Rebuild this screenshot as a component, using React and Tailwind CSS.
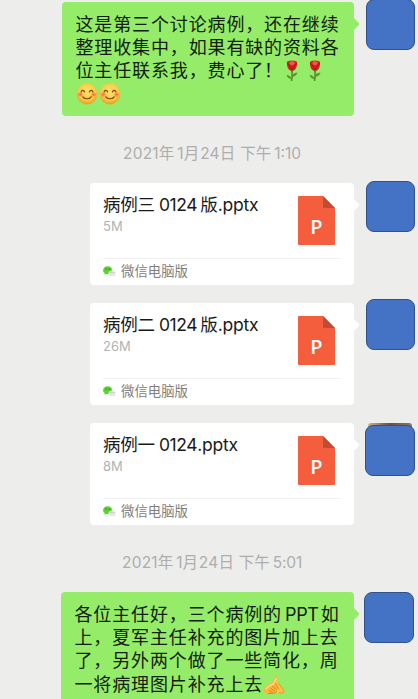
import clsx from "clsx";

// ---------- Data ----------
const files = [
  { id: 3, name: ["病例三", "0124", "版", ".pptx"], size: "5M", row: "mt-[20px]", avatar: "-mt-[2px] ml-[12px] w-[49px]" },
  { id: 2, name: ["病例二", "0124", "版", ".pptx"], size: "26M", row: "mt-[18px]", avatar: "-mt-[4px] ml-[12px] w-[49px]" },
  { id: 1, name: ["病例一", "0124", "", ".pptx"], size: "8M", row: "mt-[18px]", avatar: "ml-[11px] w-[50px]", peek: true },
];

// ---------- Emoji ----------
function Smile() {
  return (
    <svg width="22" height="22" viewBox="0 0 22 22" className="mr-px shrink-0">
      <defs>
        <radialGradient id="face" cx="50%" cy="38%" r="62%">
          <stop offset="0" stopColor="#ffe56a" />
          <stop offset="0.65" stopColor="#fdca42" />
          <stop offset="1" stopColor="#ea9a20" />
        </radialGradient>
        <radialGradient id="blush">
          <stop offset="0" stopColor="#f8604a" />
          <stop offset="1" stopColor="#f8604a" stopOpacity="0.1" />
        </radialGradient>
      </defs>
      <circle cx="11" cy="11" r="10.4" fill="url(#face)" />
      <ellipse cx="4.4" cy="11.5" rx="3" ry="2.4" fill="url(#blush)" />
      <ellipse cx="17.6" cy="11.5" rx="3" ry="2.4" fill="url(#blush)" />
      <g fill="none" stroke="#7a4312" strokeWidth="1.2" strokeLinecap="round">
        <path d="M5.1 9c.5-2.200 2.900-2.200 3.500 0M13.400 9c.6-2.200 3-2.200 3.500 0" />
        <path d="M6.800 13.800c2 2.600 6.400 2.600 8.400 0" />
      </g>
    </svg>
  );
}

function Rose({ className }) {
  return (
    <svg width="12" height="22" viewBox="0 0 12 22" className={clsx("shrink-0", className)}>
      <path d="M6 10c.3 4 .2 7-.4 11" fill="none" stroke="#4e8a2a" strokeWidth="1.5" />
      <path d="M5.600 19C2.800 19 1.200 17.400.5 15c2.900.2 4.600 1.500 5.100 4z" fill="#5d962f" />
      <path d="M6 16.800c.4-2.500 2-4 5.400-4.200-.5 2.700-2.300 4.200-5.400 4.200z" fill="#5d962f" />
      <path d="M2.600 9.300 6 11.700l3.600-2.400z" fill="#4b7d2b" />
      <path d="M1 1.800C2.500.6 4 .8 6 .5c2 .3 3.500.1 5 1.300.3 3.500-.4 8.700-5 8.900C1.400 10.500.7 5.300 1 1.800z" fill="#d81f20" />
      <path d="M3.300 2.200C5 1 7 1 8.700 2.200 8.500 4 7.500 5 6 5.200 4.500 5 3.500 4 3.300 2.200z" fill="#f4584c" />
      <path d="M1.300 3.200C3 5 4.700 6.500 6 10M10.700 3.200C9.400 5 7.600 7 6 10" fill="none" stroke="#a50f16" strokeWidth="0.8" />
    </svg>
  );
}

function Hands() {
  return (
    <svg width="22" height="20" viewBox="0 0 22 20" className="mt-[2px] shrink-0">
      {/* raised hand */}
      <path d="M12.600 1.300c.8-.8 1.900-.4 2 .7l.6 5.800 5.500 7.500c.5.900-.1 2.700-1.400 2.700l-5.300-.3-4-4.500z" fill="#ffc247" />
      <path d="m15.200 7.800 5.500 7.500c.5.900-.1 2.700-1.400 2.700l-3.300-.2" fill="none" stroke="#e98c2b" strokeWidth="0.900" />
      {/* front hand */}
      <path d="M.6 13.600 5.200 9.300l3.900-2.200 3.700-5.900c.9-.8 1.900 0 1.600 1.100l-2 6.300 3.200 4.800c.3 1-.8 1.500-1.500.8l-.5 2.300c-.3 1.300-1.600 1.500-3 1.700l-5.300.4L1 17.300z" fill="#ffb63c" />
      <path d="M3 13.800 7 10.300l3.500-1.500 2.700-5.200" fill="none" stroke="#ffe08a" strokeWidth="1.300" strokeLinecap="round" />
      <path d="m12.400 8.600 3.200 4.800M9.500 11.300l4 3.300M7.800 13.500l3.900 2.600M6.200 15.500l3 1.700M5.300 18.600l5.300-.4c1.400-.2 2.700-.4 3-1.700" fill="none" stroke="#dc7628" strokeWidth="0.900" strokeLinecap="round" />
    </svg>
  );
}

// ---------- Icons ----------
function WechatIcon() {
  return (
    <svg width="13" height="11" viewBox="0 0 13 11" className="shrink-0">
      <path d="M4.700.2C2.100.2.1 2 .1 4.300c0 1.300.6 2.200 1.600 2.900l-.4 1.500 1.700-.8c.6.200 1.100.2 1.700.2 2.600 0 4.600-1.700 4.600-3.800S7.300.2 4.700.2z" fill="#56d62b" />
      <ellipse cx="9.100" cy="7.300" rx="3.600" ry="2.900" fill="#e6e6e8" />
      <path d="m10.400 9.600 1.400 1.100-.2-1.800z" fill="#dedee1" />
      <circle cx="3.100" cy="3.100" r="0.700" fill="#1f7415" />
      <circle cx="6.300" cy="3.100" r="0.700" fill="#1f7415" />
      <circle cx="8" cy="6.600" r="0.500" fill="#999" />
      <circle cx="10.300" cy="6.600" r="0.500" fill="#999" />
    </svg>
  );
}

function PptIcon() {
  return (
    <div className="grid h-[49px] w-[37px] shrink-0">
      <svg width="37" height="49" viewBox="0 0 37 49" className="col-start-1 row-start-1">
        <path d="M1 0h24l12 12v36a1 1 0 0 1-1 1H1a1 1 0 0 1-1-1V1a1 1 0 0 1 1-1z" fill="#f45e3d" />
        <path d="M25 0v11a1 1 0 0 0 1 1h11z" fill="#c24b31" />
      </svg>
      <span className="col-start-1 row-start-1 mt-[21px] text-center font-['Open_Sans',sans-serif] text-[20px] leading-[20px] font-semibold text-white">
        P
      </span>
    </div>
  );
}

// ---------- Parts ----------
function Tail({ className }) {
  return (
    <svg width="6" height="12" viewBox="0 0 6 12" className={clsx("absolute top-[16px] left-full", className)}>
      <path d="M0 0l4.800 5.100q.8.900 0 1.800L0 12z" fill="currentColor" />
    </svg>
  );
}

function Avatar({ className, peek }) {
  return (
    <div className={clsx("shrink-0", className)}>
      {/* edge of the photo behind the cover */}
      {peek && (
        <div className="mx-[3px] -mb-[2px] h-[4px] rounded-t-[3px] bg-linear-to-r from-[#d3b18e] via-[#62504a] to-[#927867]" />
      )}
      <div className="h-[51px] rounded-[8px] border border-[#2f528f] bg-[#4472c4]" />
    </div>
  );
}

function Line({ children }) {
  return <div className="flex h-[23.200px] items-center whitespace-nowrap">{children}</div>;
}

function Timestamp({ time, className }) {
  return (
    <div className={clsx("flex h-[18px] items-center whitespace-nowrap text-[15.500px] text-[#adadad]", className)}>
      <span className="tracking-[0.200px]">2021</span>
      <span>年</span>
      <span className="ml-[3px]">1</span>
      <span>月</span>
      <span className="ml-px tracking-[0.200px]">24</span>
      <span>日</span>
      <span className="ml-[5px]">下午</span>
      <span className="ml-[3px]">{time}</span>
    </div>
  );
}

function FileCard({ file }) {
  const [title, code, version, ext] = file.name;
  return (
    <div className="relative h-[102px] w-[264px] rounded-[4px] bg-white px-[13px] pt-[13px]">
      <Tail className="text-white" />
      <div className="flex h-[63px] justify-between border-b border-[#f0f0f0]">
        <div>
          <div className="flex h-[19px] items-center text-[17.500px] whitespace-nowrap text-[#191919]">
            <span className="tracking-[-0.200px]">{title}</span>
            <span className="ml-[4px] tracking-[-0.400px]">{code}</span>
            {version && <span className="ml-[3px]">{version}</span>}
            <span className="tracking-[-0.200px]">{ext}</span>
          </div>
          <div className="mt-[3px] text-[13px] leading-[16px] text-[#b2b2b2]">{file.size}</div>
        </div>
        <div className="mr-[6px]">
          <PptIcon />
        </div>
      </div>
      <div className="flex h-[25px] items-center gap-[5px] text-[13.400px] text-[#808080]">
        <WechatIcon />
        <span>微信电脑版</span>
      </div>
    </div>
  );
}

export default function App() {
  return (
    <main className="h-[699px] w-[418px] overflow-hidden bg-[#ededec] font-[Inter,'Noto_Sans_CJK_SC',sans-serif]">
      <div className="flex items-start pt-[2px] pl-[62px]">
        <div className="relative h-[114px] w-[292px] rounded-[4px] bg-[#95ec69] pt-[11px] pl-[13.500px] text-[18px] tracking-[0.860px] text-[#132010]">
          <Tail className="text-[#95ec69]" />
          <Line>这是第三个讨论病例，还在继续</Line>
          <Line>整理收集中，如果有缺的资料各</Line>
          <Line>
            位主任联系我，费心了！
            <Rose className="ml-[3px]" />
            <Rose className="ml-[11px]" />
          </Line>
          <Line>
            <Smile />
            <Smile />
          </Line>
        </div>
        <Avatar className="-mt-[3px] ml-[12px] w-[49px]" />
      </div>

      <Timestamp time="1:10" className="mt-[29px] ml-[123px]" />

      {files.map((file) => (
        <div key={file.id} className={clsx("flex h-[102px] items-start pl-[90px]", file.row)}>
          <FileCard file={file} />
          <Avatar className={file.avatar} peek={file.peek} />
        </div>
      ))}

      <Timestamp time="5:01" className="mt-[29px] ml-[122px] tracking-[-0.100px]" />

      <div className="mt-[20px] flex items-start pl-[61px]">
        <div className="relative h-[114px] w-[293px] rounded-[4px] bg-[#95ec69] pt-[11px] pl-[13.500px] text-[18px] tracking-[0.860px] text-[#132010]">
          <Tail className="text-[#95ec69]" />
          <Line>
            各位主任好，三个病例的
            <span className="mr-[2px] ml-[3px] tracking-[-0.300px]">PPT</span>如
          </Line>
          <Line>上，夏军主任补充的图片加上去</Line>
          <Line>了，另外两个做了一些简化，周</Line>
          <Line>
            一将病理图片补充上去
            <Hands />
          </Line>
        </div>
        <Avatar className="ml-[10px] w-[50px]" />
      </div>
    </main>
  );
}
